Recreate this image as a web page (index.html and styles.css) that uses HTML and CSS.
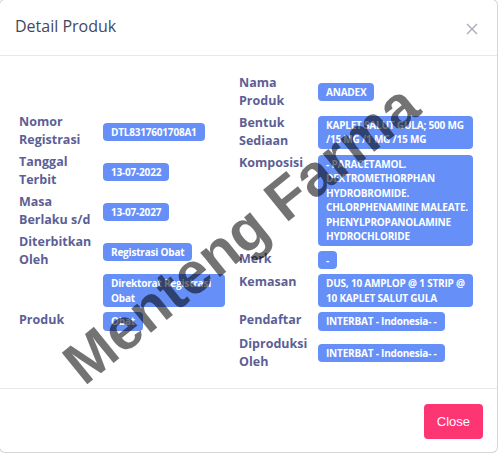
FILE: index.html
```html
<!DOCTYPE html>
<html>
<head>
<meta charset="utf-8">
<link rel="stylesheet" href="styles.css">
</head>
<body>
<div class="modal">
  <div class="modal-header">
    <h5 class="modal-title">Detail Produk</h5>
    <button class="close" aria-label="Close">
      <svg width="12" height="12" viewBox="0 0 12 12"><path d="M1 1L11 11M11 1L1 11" stroke="#a9abb8" stroke-width="1.4" fill="none"/></svg>
    </button>
  </div>
  <div class="modal-body">
    <div class="cols">
      <div class="col col-left">
        <div class="row"><div class="label">Nomor<br>Registrasi</div><div class="value"><span class="badge">DTL8317601708A1</span></div></div>
        <div class="row"><div class="label">Tanggal<br>Terbit</div><div class="value"><span class="badge">13-07-2022</span></div></div>
        <div class="row"><div class="label">Masa<br>Berlaku s/d</div><div class="value"><span class="badge">13-07-2027</span></div></div>
        <div class="row"><div class="label">Diterbitkan<br>Oleh</div><div class="value"><span class="badge">Registrasi Obat</span></div></div>
        <div class="row"><div class="label"></div><div class="value"><span class="badge wide">Direktorat Registrasi<br>Obat</span></div></div>
        <div class="row"><div class="label">Produk</div><div class="value"><span class="badge">Obat</span></div></div>
      </div>
      <div class="col col-right">
        <div class="row"><div class="label">Nama<br>Produk</div><div class="value"><span class="badge">ANADEX</span></div></div>
        <div class="row"><div class="label">Bentuk<br>Sediaan</div><div class="value"><span class="badge wide">KAPLET SALUT GULA; 500 MG<br>/15 MG /1 MG /15 MG</span></div></div>
        <div class="row"><div class="label">Komposisi</div><div class="value"><span class="badge wide">- PARACETAMOL.<br>DEXTROMETHORPHAN<br>HYDROBROMIDE.<br>CHLORPHENAMINE MALEATE.<br>PHENYLPROPANOLAMINE<br>HYDROCHLORIDE</span></div></div>
        <div class="row"><div class="label">Merk</div><div class="value"><span class="badge">-</span></div></div>
        <div class="row"><div class="label">Kemasan</div><div class="value"><span class="badge wide">DUS, 10 AMPLOP @ 1 STRIP @<br>10 KAPLET SALUT GULA</span></div></div>
        <div class="row"><div class="label">Pendaftar</div><div class="value"><span class="badge">INTERBAT - Indonesia- -</span></div></div>
        <div class="row"><div class="label">Diproduksi<br>Oleh</div><div class="value"><span class="badge">INTERBAT - Indonesia- -</span></div></div>
      </div>
    </div>
  </div>
  <div class="modal-footer">
    <button class="btn-close">Close</button>
  </div>
  <div class="watermark">Menteng Farma</div>
</div>
</body>
</html>
```
FILE: styles.css
```css
* { box-sizing: border-box; }
html, body { margin: 0; padding: 0; background: #fff; }
body { font-family: "Open Sans", "Liberation Sans", sans-serif; overflow: hidden; }

.modal {
  position: relative;
  margin: -1px 0 0 -1px;
  width: 499px;
  height: 454px;
  border: 1px solid rgba(0,0,0,.16);
  border-radius: 6px;
  background: #fff;
  display: flex;
  flex-direction: column;
  overflow: hidden;
}

.modal-header {
  height: 56px;
  border-bottom: 1px solid #e6e8ee;
  display: flex;
  align-items: center;
  justify-content: space-between;
  padding: 0 18px 0 15px;
  flex: none;
}
.modal-title {
  margin: 0 0 4px 0;
  font-size: 16px;
  font-weight: 500;
  color: #44475f;
}
.close {
  background: none;
  border: 0;
  padding: 0;
  margin-top: 2px;
  width: 14px;
  height: 14px;
  display: flex;
  align-items: center;
  justify-content: center;
}

.modal-body {
  flex: 1;
  display: flex;
  align-items: center;
  padding: 0 0 0 19px;
}
.cols {
  display: flex;
  align-items: center;
  width: 100%;
}
.col {
  display: flex;
  flex-direction: column;
  gap: 4px;
}
.col-left { width: 220px; }
.col-left .label { width: 84px; }
.col-left .value { width: 122px; }
.col-right .label { width: 79px; }
.col-right .value { width: 155px; }

.row {
  display: flex;
}
.label {
  flex: none;
  align-self: flex-start;
  font-size: 12.5px;
  font-weight: 700;
  line-height: 18px;
  color: #5c5f96;
  white-space: nowrap;
}
.value {
  flex: none;
  align-self: center;
  display: flex;
  align-items: flex-start;
  padding-top: 1px;
}
.badge {
  display: block;
  background: #6690f8;
  color: #fff;
  font-size: 10px;
  font-weight: 700;
  line-height: 14.5px;
  letter-spacing: -0.2px;
  padding: 2px 8px;
  border-radius: 4px;
  white-space: nowrap;
}
.badge.wide {
  width: 100%;
}

.modal-footer {
  flex: none;
  height: 64px;
  border-top: 1px solid #e6e8ee;
  display: flex;
  justify-content: flex-end;
  align-items: flex-start;
  padding: 15px 14px 0 0;
}
.btn-close {
  height: 35px;
  padding: 0 13px;
  background: #fd3573;
  border: 0;
  border-radius: 4px;
  color: #fff;
  font-family: "Liberation Sans", Arial, sans-serif;
  font-size: 13px;
}

.watermark {
  position: absolute;
  left: 241px;
  top: 234px;
  transform: translate(-50%, -50%) rotate(-39deg);
  font-family: "Liberation Sans", Arial, sans-serif;
  font-weight: 700;
  font-size: 59px;
  color: rgba(0,0,0,.55);
  white-space: nowrap;
  pointer-events: none;
}
```
